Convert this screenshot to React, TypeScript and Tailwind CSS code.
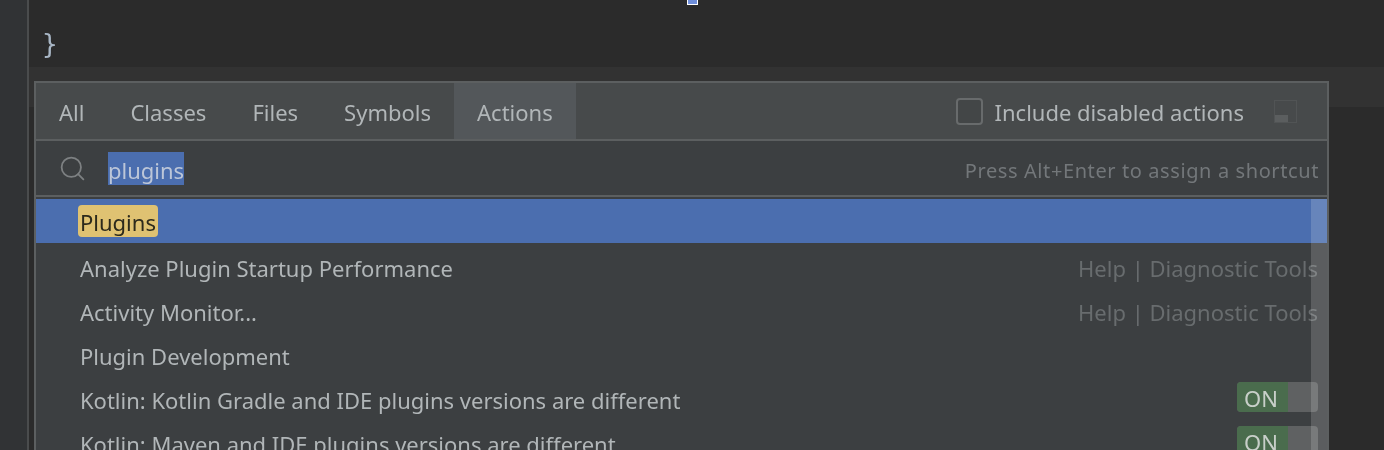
import { Search } from 'lucide-react';

const tabs = ['All', 'Classes', 'Files', 'Symbols', 'Actions'];

function Toggle() {
  return (
    <div className="flex w-[81px] h-[30px] rounded-[4px] overflow-hidden bg-[#5f6162] shrink-0">
      <div className="w-[51px] bg-[#4a6c4d] text-[#c8cfc9] text-[22px] leading-[32px] pl-[7px]">ON</div>
    </div>
  );
}

function Row({ label, right, toggle }: { label: string; right?: string; toggle?: boolean }) {
  return (
    <div className="h-[44px] shrink-0 flex items-center pl-[44px] pr-[9px] text-[#b1b6b8]">
      <span className="flex-1 whitespace-nowrap pt-[6px]">{label}</span>
      {right && <span className="text-[#686c6e] pt-[6px]">{right}</span>}
      {toggle && <Toggle />}
    </div>
  );
}

export default function App() {
  return (
    <div className="relative flex w-[1384px] h-[450px] overflow-hidden bg-[#2b2b2b] text-[22px] [font-family:'Noto_Sans',sans-serif] blur-[0.4px]">
      {/* gutter */}
      <div className="w-[27px] shrink-0 bg-[#313335] border-r-2 border-[#4a4c4d] box-content" />

      {/* editor */}
      <div className="flex-1 flex flex-col">
        <div className="h-[67px] shrink-0 relative">
          <span className="absolute left-[13px] top-[24px] text-[#a9b7c6] text-[26px] leading-[40px] [font-family:'DejaVu_Sans_Mono',monospace]">{'}'}</span>
          <div className="absolute left-[658px] top-0 w-[11px] h-[5px] bg-[#6f8fdc] border border-white border-t-0" />
        </div>
        <div className="h-[40px] shrink-0 bg-[#323232]" />
      </div>

      {/* search everywhere popup */}
      <div className="absolute left-[34px] top-[81px] w-[1295px] h-[369px] flex flex-col border-2 border-b-0 border-[#5c5f60] bg-[#3c3f41]">
        <div className="h-[58px] shrink-0 flex items-stretch bg-[#474a4b] border-b-2 border-[#5c5f60] text-[#b1b6b8]">
          {tabs.map((t) => (
            <div key={t} className={`flex items-center px-[23px] pt-[3px] ${t === 'Actions' ? 'bg-[#53575a]' : ''}`}>
              {t}
            </div>
          ))}
          <div className="flex-1" />
          <div className="flex items-center pr-[30px]">
            <div className="w-[27px] h-[27px] rounded-[4px] border-2 border-[#686b6c] mr-[12px] bg-[#434647]" />
            <span className="whitespace-nowrap pt-[3px]">Include disabled actions</span>
            <svg className="ml-[30px]" width="23" height="23" viewBox="0 0 23 23">
              <rect x="0.5" y="0.5" width="22" height="22" fill="none" stroke="#515455" />
              <rect x="1" y="15" width="13" height="7" fill="#5b5e5f" />
            </svg>
          </div>
        </div>
        <div className="h-[56px] shrink-0 flex items-center border-b-2 border-[#5c5f60]">
          <Search className="ml-[22px] w-[29px] h-[29px] text-[#7d8082]" strokeWidth={1.5} />
          <span className="ml-[21px] h-[33px] leading-[36px] bg-[#4b6eaf] text-[#bcc6d8]">plugins</span>
          <span className="flex-1" />
          <span className="pr-[8px] pt-[6px] text-[20px] text-[#73777a] tracking-[0.6px]">Press Alt+Enter to assign a shortcut</span>
        </div>
        <div className="relative flex-1 flex flex-col pt-[2px] overflow-hidden">
          <div className="h-[44px] shrink-0 flex items-center pl-[42px] bg-[#4b6eaf]">
            <span className="h-[32px] leading-[35px] px-[2px] rounded-[4px] bg-[#dfc272] text-[#2c2a1c]">Plugins</span>
          </div>
          <Row label="Analyze Plugin Startup Performance" right="Help | Diagnostic Tools" />
          <Row label="Activity Monitor..." right="Help | Diagnostic Tools" />
          <Row label="Plugin Development" />
          <Row label="Kotlin: Kotlin Gradle and IDE plugins versions are different" toggle />
          <Row label="Kotlin: Maven and IDE plugins versions are different" toggle />
          {/* scrollbar */}
          <div className="absolute right-0 top-[2px] bottom-0 w-[16px] bg-white/[0.16]" />
        </div>
      </div>
    </div>
  );
}
